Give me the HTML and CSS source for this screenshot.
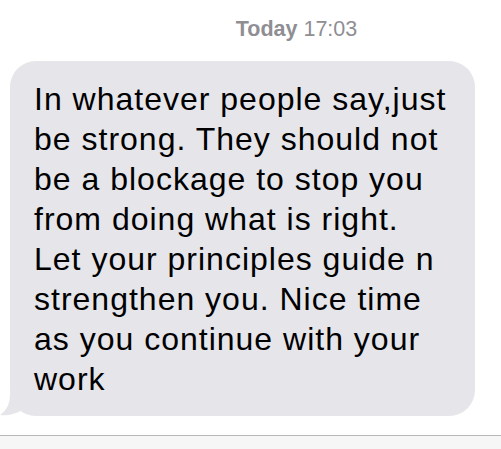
FILE: index.html
```html
<!DOCTYPE html>
<html>
<head>
<meta charset="utf-8">
<link rel="stylesheet" href="styles.css">
</head>
<body>
<div class="screen">
  <div class="stamp"><b>Today</b> 17:03</div>
  <div class="thread">
    <div class="bubble">
      <p class="msg">In whatever people say,just<br>be strong. They should not<br>be a blockage to stop you<br>from doing what is right.<br>Let your principles guide n<br>strengthen you. Nice time<br>as you continue with your<br>work</p>
      <svg class="tail" width="30" height="24" viewBox="0 0 30 24"><path d="M10 0 C10 10 8 16 0 22 C8 23 16 21 22 17 L30 17 L30 0 Z" fill="#e5e5ea"/></svg>
    </div>
  </div>
  <div class="bar"></div>
</div>
</body>
</html>
```
FILE: styles.css
```css
html, body {
  margin: 0;
  padding: 0;
  background: #ffffff;
}
.screen {
  width: 501px;
  height: 449px;
  display: flex;
  flex-direction: column;
  overflow: hidden;
  font-family: "Liberation Sans", Arial, sans-serif;
}
.stamp {
  padding-top: 17px;
  padding-left: 92px;
  text-align: center;
  font-size: 21.5px;
  line-height: 24px;
  color: #8e8e93;
}
.stamp b {
  font-weight: bold;
}
.thread {
  margin-top: 20px;
  padding-left: 10px;
}
.bubble {
  position: relative;
  width: 465px;
  box-sizing: border-box;
  background: #e5e5ea;
  border-radius: 26px;
  padding: 18px 10px 17px 24px;
}
.msg {
  margin: 0;
  font-size: 32px;
  letter-spacing: 1px;
  line-height: 40px;
  white-space: nowrap;
  color: #000000;
}
.tail {
  position: absolute;
  left: -10px;
  bottom: -1px;
}
.bar {
  margin-top: auto;
  height: 13px;
  border-top: 1px solid #b7b7b7;
  background: #f6f6f6;
}
```
